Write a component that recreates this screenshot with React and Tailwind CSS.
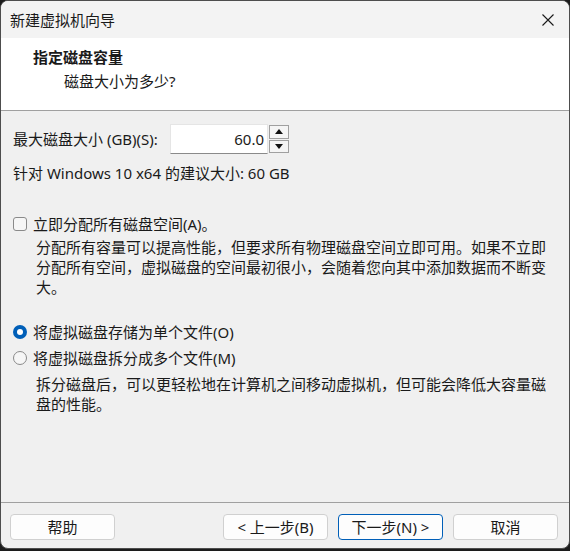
import React from 'react'

const font = { fontFamily: '"Noto Sans", "Noto Sans CJK SC", sans-serif' }

function Radio({ checked }) {
  return checked ? (
    <span className="flex h-[14px] w-[14px] items-center justify-center rounded-full bg-[#005fb8]">
      <span className="h-[6px] w-[6px] rounded-full bg-white" />
    </span>
  ) : (
    <span className="h-[14px] w-[14px] rounded-full border border-[#8a8a8a] bg-[#f6f6f6]" />
  )
}

function Button({ children, primary }) {
  return (
    <button
      type="button"
      className={`flex h-[26px] w-[105px] items-center justify-center rounded-[4px] border bg-[#fdfdfd] text-[15px] leading-[20px] text-[#1a1a1a] ${primary ? 'border-[#005fb8]' : 'border-[#d0d0d0]'}`}
    >
      {children}
    </button>
  )
}

function Lines({ lines, className = '' }) {
  return (
    <div className={className}>
      {lines.map(line => (
        <div key={line} className="whitespace-nowrap">{line}</div>
      ))}
    </div>
  )
}

export default function App() {
  return (
    <div className="h-[551px] w-[570px] bg-[#1c1c1c] pb-[2px]" style={font}>
      <div className="flex h-full flex-col overflow-hidden rounded-[8px] border border-[#4d4d4d] bg-[#f0f0f0] text-[15px] leading-[20px] text-[#1a1a1a]">
        {/* title bar */}
        <div className="flex h-[37px] shrink-0 items-center justify-between bg-[#f3f3f3] pl-[9px] pr-[15px]">
          <span>新建虚拟机向导</span>
          <svg width="12" height="12" viewBox="0 0 12 12" fill="none" stroke="#1a1a1a" strokeWidth="1.1">
            <path d="M0.5 0.5l11 11M11.5 0.5l-11 11" />
          </svg>
        </div>

        {/* header */}
        <div className="h-[73px] shrink-0 border-b border-[#a0a0a0] bg-white pl-[32px] pt-[9px]">
          <div className="font-bold">指定磁盘容量</div>
          <div className="mt-[4px] pl-[31px]">磁盘大小为多少?</div>
        </div>

        {/* body */}
        <div className="flex-1 px-[12px] pt-[13px]">
          <div className="flex h-[30px] items-center">
            <span className="w-[157px]">最大磁盘大小 (GB)(S):</span>
            <div className="flex h-[30px] w-[98px] items-center justify-end border border-[#e5e5e5] border-b-[#8a8a8a] bg-white pr-[3px]">
              60.0
            </div>
            <div className="ml-[1px] flex h-[30px] w-[20px] flex-col gap-[1px] py-[1px]">
              <div className="flex flex-1 items-center justify-center border border-[#a0a0a0] bg-[#f5f5f5]">
                <svg width="8" height="5" viewBox="0 0 8 5"><path d="M0 5L4 0L8 5Z" fill="#111" /></svg>
              </div>
              <div className="flex flex-1 items-center justify-center border border-[#a0a0a0] bg-[#f5f5f5]">
                <svg width="8" height="5" viewBox="0 0 8 5"><path d="M0 0L8 0L4 5Z" fill="#111" /></svg>
              </div>
            </div>
          </div>
          <div className="mt-[9px]">针对 Windows 10 x64 的建议大小: 60 GB</div>

          <div className="mt-[31px] flex items-center gap-[6px]">
            <span className="h-[14px] w-[14px] rounded-[3px] border border-[#8a8a8a] bg-[#f6f6f6]" />
            <span>立即分配所有磁盘空间(A)。</span>
          </div>
          <Lines
            className="mt-[3px] pl-[23px]"
            lines={[
              '分配所有容量可以提高性能，但要求所有物理磁盘空间立即可用。如果不立即',
              '分配所有空间，虚拟磁盘的空间最初很小，会随着您向其中添加数据而不断变',
              '大。'
            ]}
          />

          <div className="mt-[25px] flex items-center gap-[6px]">
            <Radio checked />
            <span>将虚拟磁盘存储为单个文件(O)</span>
          </div>
          <div className="mt-[6px] flex items-center gap-[6px]">
            <Radio />
            <span>将虚拟磁盘拆分成多个文件(M)</span>
          </div>
          <Lines
            className="mt-[6px] pl-[23px]"
            lines={[
              '拆分磁盘后，可以更轻松地在计算机之间移动虚拟机，但可能会降低大容量磁',
              '盘的性能。'
            ]}
          />
        </div>

        {/* footer */}
        <div className="flex h-[46px] shrink-0 items-start justify-between border-t border-[#a0a0a0] pl-[9px] pr-[11px] pt-[11px]">
          <Button>帮助</Button>
          <div className="flex gap-[10px]">
            <Button>&lt; 上一步(B)</Button>
            <Button primary>下一步(N) &gt;</Button>
            <Button>取消</Button>
          </div>
        </div>
      </div>
    </div>
  )
}
